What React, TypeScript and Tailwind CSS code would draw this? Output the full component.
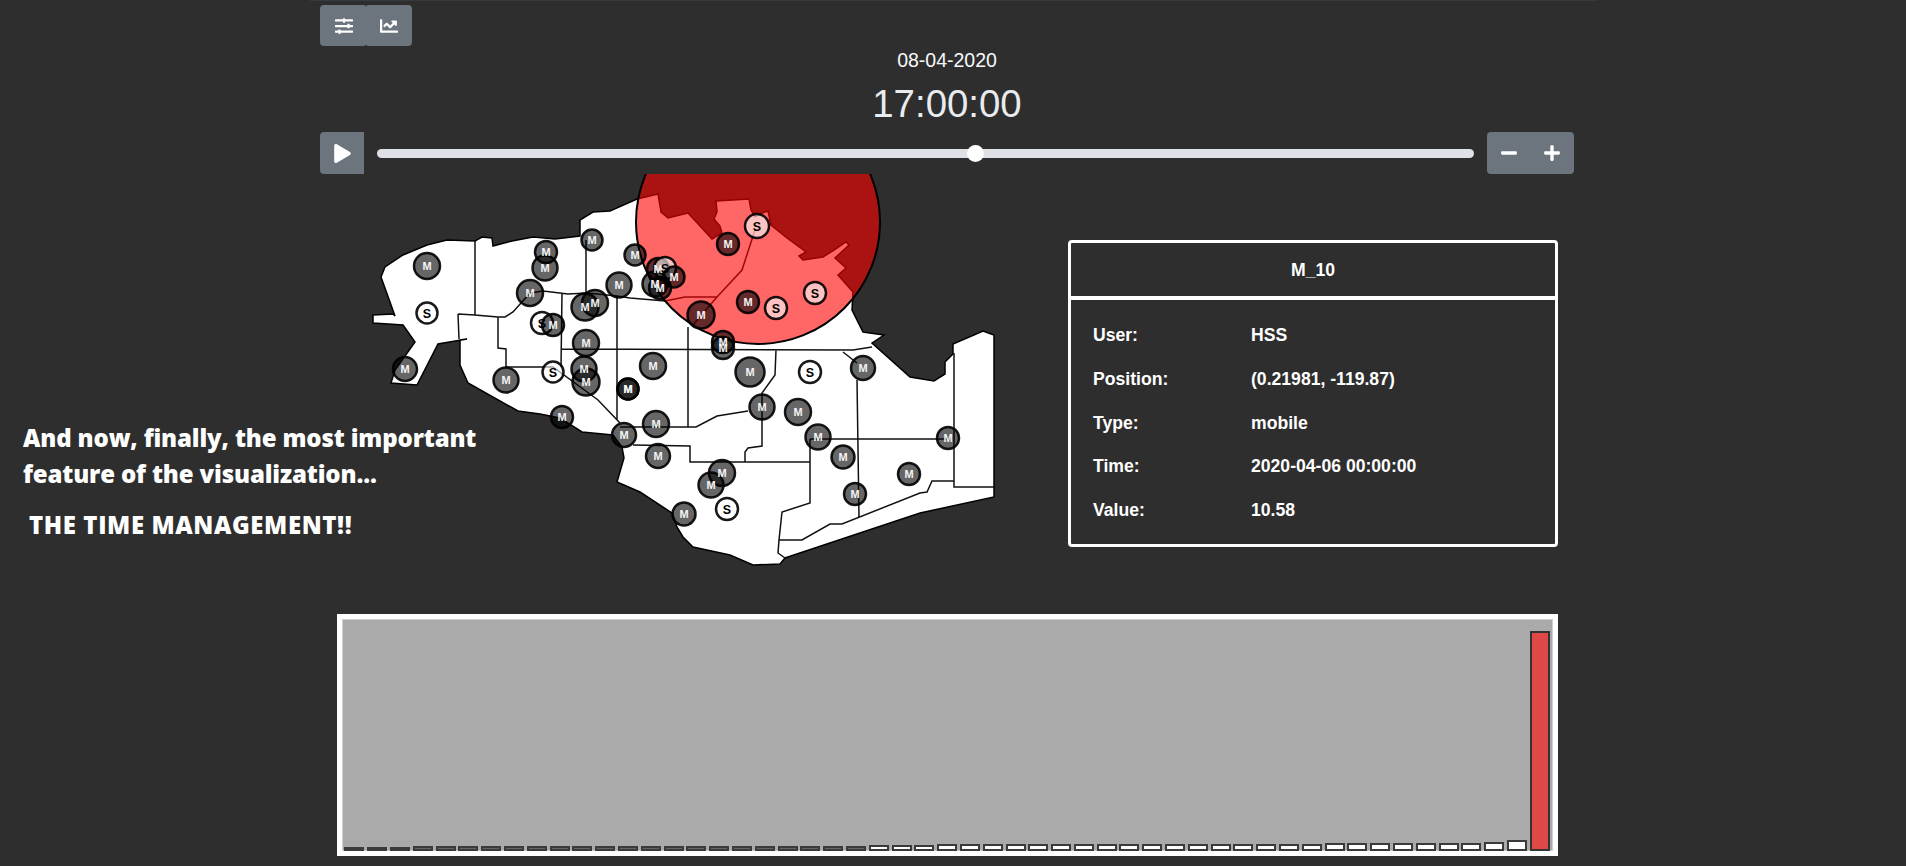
import { FaChartLine, FaMinus, FaPlay, FaPlus, FaSlidersH } from "react-icons/fa";

type Marker = [string, number, number, number];

// x, y in screen px; the svg below starts at 0,174 of the page
const markers: Marker[] = [
  ["M", 427, 266, 13], ["S", 427, 313, 10.5], ["M", 405, 369, 12], ["M", 546, 252, 11], ["M", 545, 268, 12.5],
  ["M", 592, 240, 10.5], ["M", 635, 255, 10.5], ["M", 530, 293, 13], ["M", 619, 285, 12.5], ["M", 585, 307, 13.5],
  ["M", 595, 303, 13], ["S", 542, 323, 11], ["M", 553, 325, 11], ["M", 586, 343, 13], ["M", 653, 366, 13],
  ["M", 584, 369, 12.5], ["M", 586, 382, 13.5], ["S", 553, 372, 10.5], ["M", 506, 380, 12.5], ["M", 628, 389, 10.5],
  ["M", 628, 389, 10.5], ["M", 562, 417, 11], ["M", 624, 435, 12], ["M", 656, 424, 13], ["M", 658, 456, 12],
  ["M", 750, 372, 14.5], ["S", 810, 372, 11], ["M", 863, 368, 12], ["M", 762, 407, 12.5], ["M", 798, 412, 13],
  ["M", 818, 437, 12.5], ["M", 843, 457, 11.5], ["M", 948, 438, 11], ["M", 722, 473, 13], ["M", 711, 485, 12.5],
  ["M", 855, 494, 11], ["M", 909, 474, 11], ["S", 727, 509, 11], ["M", 684, 514, 11.5], ["S", 757, 226, 12],
  ["M", 728, 244, 11], ["M", 748, 302, 11], ["S", 776, 308, 11], ["S", 815, 293, 11], ["M", 701, 315, 13.5],
  ["M", 723, 342, 11], ["M", 723, 348, 11], ["M", 658, 269, 11], ["S", 665, 268, 11], ["M", 674, 277, 10.5],
  ["M", 655, 284, 12.5], ["M", 660, 288, 11],
];

const outline =
  "M373,315 L393,314 L395,316 L381,277 L385,267 L403,255 L427,245 L447,240 L475,241 L482,237 L492,238 L493,246 L512,241 L533,237 L555,239 L580,236 L580,220 L593,212 L610,211 L637,199 L658,194 L661,212 L668,218 L688,213 L712,239 L722,233 L720,226 L714,219 L717,212 L716,201 L749,199 L751,210 L755,217 L762,213 L768,211 L771,225 L787,238 L806,252 L799,256 L803,260 L823,257 L834,250 L846,242 L849,245 L835,258 L846,268 L838,275 L853,292 L852,310 L863,332 L884,335 L872,343 L910,377 L934,381 L945,374 L945,362 L953,354 L953,344 L983,331 L994,335 L994,497 L920,513 L785,558 L780,564 L753,565 L730,555 L693,547 L683,537 L677,527 L672,513 L640,492 L617,482 L624,458 L622,447 L613,435 L582,432 L560,418 L540,414 L518,411 L468,383 L460,365 L460,340 L467,339 L438,344 L417,385 L391,383 L395,370 L415,342 L403,325 L373,323 Z";

const borders = [
  "M475,241 L475,315 L498,317 L505,317 L513,312 L530,293 L543,291 L568,294 L587,293 L617,296 L630,298 L665,301 L685,297 L717,297",
  "M458,314 L459,339 M458,314 L475,315",
  "M498,317 L498,348 L506,349 L506,367 L553,367 L598,400 L620,423",
  "M562,294 L561,367",
  "M561,349 L853,350 L872,347",
  "M586,240 L586,293",
  "M617,296 L617,420",
  "M620,427 L696,427 L717,416 L748,411",
  "M688,327 L688,427",
  "M633,445 L690,446 L690,462 L745,462 L745,452 L748,448 L762,446 L762,393 L775,375 L776,350",
  "M745,462 L810,462 L810,503 L782,512 L779,540 L778,553 L785,558",
  "M779,540 L802,540 L830,524 L842,524 L920,493 L927,492 L932,481 L954,481",
  "M954,353 L954,487 L994,487",
  "M810,439 L948,439 M810,439 L810,462",
  "M857,380 L859,517",
  "M843,352 L857,363",
  "M755,230 L742,270 L717,297 L693,325",
];

const rows = [
  ["User:", "HSS"],
  ["Position:", "(0.21981, -119.87)"],
  ["Type:", "mobile"],
  ["Time:", "2020-04-06 00:00:00"],
  ["Value:", "10.58"],
];

const barHeights = [
  4, 4, 4, 5, 5, 5, 5, 5, 5, 5, 5, 5, 5, 5, 5, 5, 5, 5, 5, 5, 5, 5, 5, 6, 6, 6, 7, 7, 7, 7, 7, 7, 7, 7, 7, 7, 7, 7,
  7, 7, 7, 7, 7, 8, 8, 8, 8, 8, 8, 8, 9, 11, 220,
];

function barClass(i: number) {
  if (i === 52) return "w-[20px] shrink-0 border-2 border-[#333] bg-[#e04848]";
  if (i < 23) return "w-[20px] shrink-0 border-2 border-[#3a3a3a] bg-[#666]";
  return "w-[20px] shrink-0 border-2 border-[#3a3a3a] bg-white";
}

function MapView() {
  return (
    <svg className="block shrink-0" width="1010" height="410" viewBox="0 174 1010 410">
      <path d={outline} fill="#fff" stroke="#000" strokeWidth="1.5" />
      <path d={borders.join(" ")} fill="none" stroke="#111" strokeWidth="1.5" />
      <circle cx="758" cy="222" r="122" fill="#ff0000" fillOpacity="0.6" stroke="#000" strokeWidth="2" />
      {markers.map(([label, x, y, r], i) => (
        <circle key={i} cx={x} cy={y} r={r} fill={label === "M" ? "#000" : "#fff"} fillOpacity="0.6" stroke="#000" strokeOpacity="0.9" strokeWidth="2.5" />
      ))}
      {/* labels go on top so the overlapping markers keep theirs readable */}
      {markers.map(([label, x, y], i) => (
        <text
          key={i}
          x={x}
          y={label === "M" ? y + 4 : y + 4.5}
          textAnchor="middle"
          fontSize={label === "M" ? 11 : 12.5}
          fontWeight="700"
          fontFamily="'Liberation Sans', Arial, sans-serif"
          fill={label === "M" ? "#f4f4f4" : "#000"}
        >
          {label}
        </text>
      ))}
    </svg>
  );
}

export default function App() {
  return (
    <div className="relative h-[866px] overflow-hidden bg-[#2e2e2e] font-['Liberation_Sans',Arial,sans-serif] text-white">
      <div className="ml-[310px] h-px w-[1288px] bg-[#343a40]" />
      <div className="ml-[320px] w-[1254px] pt-[4px]">
        <div className="flex h-[41px]">
          <button className="flex w-[47px] items-center justify-center rounded bg-[#6c757d] text-white">
            <FaSlidersH size={18} />
          </button>
          <button className="-ml-[2px] flex w-[47px] items-center justify-center rounded bg-[#6c757d] text-white">
            <FaChartLine size={18} />
          </button>
        </div>

        <div className="text-center text-[19.5px] leading-[28px] text-[#f8f9fa]">08-04-2020</div>
        <div className="mt-[7px] text-center text-[38.4px] leading-[46px] font-light text-[#e9ecef]">17:00:00</div>

        <div className="mt-[5px] flex h-[42px] items-center">
          <button className="flex h-full w-[44px] items-center justify-center rounded-l bg-[#6c757d] text-white">
            <FaPlay size={19} />
          </button>
          <div className="relative mx-[13px] h-[9px] flex-1 rounded-full bg-[#dee2e6]">
            <div className="absolute left-[590px] top-[-4px] h-[17px] w-[17px] rounded-full bg-white" />
          </div>
          <div className="flex h-full w-[87px] rounded bg-[#6c757d]">
            <button className="flex flex-1 items-center justify-center text-white"><FaMinus size={18} /></button>
            <button className="flex flex-1 items-center justify-center text-white"><FaPlus size={18} /></button>
          </div>
        </div>
      </div>

      <div className="flex h-[440px] items-start">
        <div className="w-[1068px] shrink-0 overflow-hidden">
          <MapView />
        </div>
        <div className="mt-[66px] flex h-[307px] w-[490px] flex-col rounded border-[3px] border-white text-[17.6px] font-bold">
          <div className="flex h-[53px] shrink-0 items-center justify-center pt-[2px]">M_10</div>
          <div className="h-[4px] shrink-0 bg-white" />
          <div className="grid grid-cols-[158px_1fr] auto-rows-[43.8px] items-center pl-[22px] pt-[13.3px]">
            {rows.map(([label, value]) => (
              <div key={label} className="contents">
                <span>{label}</span>
                <span>{value}</span>
              </div>
            ))}
          </div>
        </div>
      </div>

      <div className="ml-[337px] flex h-[242px] w-[1221px] items-end gap-[2.8px] border-[5px] border-white bg-[#aaa] pl-[2.4px] shadow-[inset_0_0_0_1px_#cfcfcf]">
        {barHeights.map((h, i) => (
          <div key={i} className={barClass(i)} style={{ height: h }} />
        ))}
      </div>

      <div className="absolute left-[23px] top-[420px] font-['Open_Sans',sans-serif] text-[24px] font-extrabold leading-[36px] tracking-[-0.15px]">
        <div>And now, finally, the most important</div>
        <div>feature of the visualization...</div>
        <div className="ml-[6px] mt-[15px] tracking-[0.6px]">THE TIME MANAGEMENT!!</div>
      </div>
    </div>
  );
}
